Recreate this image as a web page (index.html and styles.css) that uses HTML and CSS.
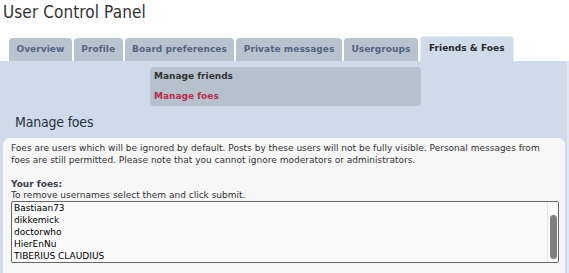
FILE: index.html
```html
<!DOCTYPE html>
<html lang="en">
<head>
    <meta charset="UTF-8">
    <title>User Control Panel</title>
    <link rel="stylesheet" href="styles.css">
</head>
<body>
    <h1 class="page-title">User Control Panel</h1>

    <!-- Tabs -->
    <ul class="tabs">
        <li class="tab">Overview</li>
        <li class="tab">Profile</li>
        <li class="tab">Board preferences</li>
        <li class="tab">Private messages</li>
        <li class="tab">Usergroups</li>
        <li class="tab active">Friends &amp; Foes</li>
    </ul>

    <div class="panel">
        <ul class="submenu">
            <li class="sub-item">Manage friends</li>
            <li class="sub-item current">Manage foes</li>
        </ul>

        <h2 class="section-title">Manage foes</h2>

        <div class="content">
            <p class="intro">Foes are users which will be ignored by default. Posts by these users will not be fully visible. Personal messages from foes are still permitted. Please note that you cannot ignore moderators or administrators.</p>

            <div class="field-label">Your foes:</div>
            <div class="field-hint">To remove usernames select them and click submit.</div>
            <div class="list-wrap">
                <select class="foes-list" multiple size="5">
                    <option>Bastiaan73</option>
                    <option>dikkemick</option>
                    <option>doctorwho</option>
                    <option>HierEnNu</option>
                    <option>TIBERIUS CLAUDIUS</option>
                    <option>Vortigern</option>
                    <option>zwartekat</option>
                </select>
                <!-- overlay scrollbar, headless hides the native one -->
                <div class="scroll-track"><div class="scroll-thumb"></div></div>
            </div>
        </div>
    </div>
</body>
</html>
```
FILE: styles.css
```css
body {
    margin: 0;
    padding: 0;
    background-color: #fff;
    color: #333;
    font-family: "DejaVu Sans", Verdana, sans-serif;
    font-size: 9px;
    overflow: hidden;
}

.page-title {
    margin: 0;
    padding: 1px 0 0 3px;
    font-family: "DejaVu Sans Condensed", "DejaVu Sans", sans-serif;
    font-stretch: condensed;
    font-weight: normal;
    font-size: 17px;
    line-height: 22px;
    color: #333;
    letter-spacing: 0.1px;
}

/* tab row */
.tabs {
    list-style: none;
    margin: 14px 0 0 0;
    padding: 0 0 0 9px;
    display: flex;
    align-items: flex-end;
    gap: 2px;
    height: 24px;
}

.tab {
    background-color: #b7c3cf;
    color: #536482;
    font-weight: bold;
    padding: 0 7.5px;
    height: 23px;
    line-height: 23px;
    border-radius: 4px 4px 0 0;
    letter-spacing: 0.05px;
}

.tab.active {
    background-color: #cfdbea;
    color: #282828;
    height: 25px;
    line-height: 22px;
    margin-bottom: -1px;
    border: 1px solid #e3ebf3;
    border-bottom: none;
    padding: 0 8px 0 8px;
}

.panel {
    background-color: #cfdbea;
    height: 213px;
    padding: 6px 0 0 0;
    border-right: 2px solid #dfe7f0;
    box-sizing: border-box;
}

.submenu {
    list-style: none;
    margin: 0 0 0 150px;
    padding: 2px 0 0 4px;
    width: 267px;
    height: 37px;
    background-color: #b5c1cc;
    border-radius: 4px;
}

.sub-item {
    font-weight: bold;
    color: #333;
    line-height: 11px;
    margin-top: 2px;
    margin-bottom: 9px;
}

.sub-item.current {
    color: #bc2a4d;
}

.section-title {
    margin: 7px 0 0 15px;
    font-family: "DejaVu Sans Condensed", "DejaVu Sans", sans-serif;
    font-stretch: condensed;
    font-weight: normal;
    font-size: 14px;
    line-height: 18px;
    color: #28313f;
    letter-spacing: -0.2px;
}

.content {
    background-color: #f7f7f7;
    margin: 7px 2px 0 3px;
    padding: 4px 8px 0 8px;
    height: 140px;
    border-radius: 7px 7px 0 0;
}

.intro {
    margin: 0;
    line-height: 12px;
}

.field-label {
    margin-top: 13px;
    font-weight: bold;
    color: #3a4150;
    line-height: 11px;
}

.field-hint {
    line-height: 11px;
}

.list-wrap {
    position: relative;
    width: 548px;
}

.foes-list {
    display: block;
    width: 548px;
    height: 62px;
    margin: 0;
    padding: 1px 0 0 0;
    border: 1px solid #666;
    background-color: #fafafa;
    color: #000;
    font-family: "DejaVu Sans", Verdana, sans-serif;
    font-size: 9px;
    outline: none;
    box-sizing: border-box;
    overflow: hidden;
}

.foes-list option {
    padding: 0 0 0 2px;
    line-height: 12px;
    height: 12px;
}

.scroll-track {
    position: absolute;
    top: 1px;
    right: 1px;
    bottom: 1px;
    width: 10px;
    background-color: #fafafa;
    border-left: 1px solid #e6e6e6;
}

.scroll-thumb {
    position: absolute;
    top: 13px;
    left: 2px;
    width: 7px;
    height: 44px;
    border-radius: 4px;
    background-color: #7f7f7f;
}
```
